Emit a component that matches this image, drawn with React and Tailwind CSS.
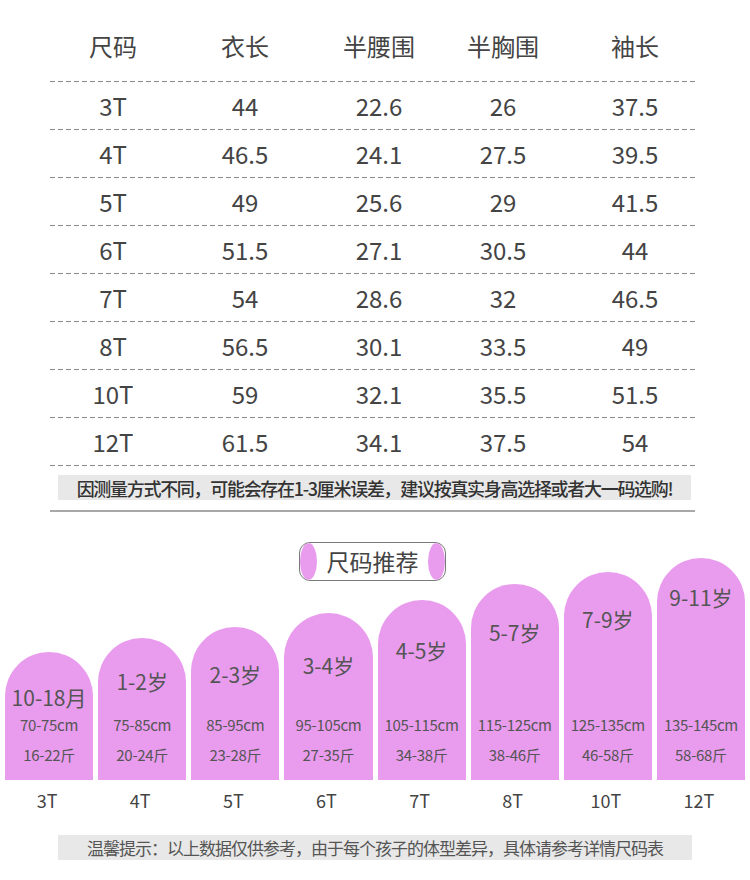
import React from "react";

const rows = [
  ["3T", "44", "22.6", "26", "37.5"],
  ["4T", "46.5", "24.1", "27.5", "39.5"],
  ["5T", "49", "25.6", "29", "41.5"],
  ["6T", "51.5", "27.1", "30.5", "44"],
  ["7T", "54", "28.6", "32", "46.5"],
  ["8T", "56.5", "30.1", "33.5", "49"],
  ["10T", "59", "32.1", "35.5", "51.5"],
  ["12T", "61.5", "34.1", "37.5", "54"],
];

const bars = [
  { h: "h-[128px]", pt: "pt-[31px]", age: "10-18月", cm: "70-75cm", kg: "16-22斤", size: "3T" },
  { h: "h-[142px]", pt: "pt-[29px]", age: "1-2岁", cm: "75-85cm", kg: "20-24斤", size: "4T" },
  { h: "h-[153px]", pt: "pt-[33px]", age: "2-3岁", cm: "85-95cm", kg: "23-28斤", size: "5T" },
  { h: "h-[167px]", pt: "pt-[38px]", age: "3-4岁", cm: "95-105cm", kg: "27-35斤", size: "6T" },
  { h: "h-[180px]", pt: "pt-[36px]", age: "4-5岁", cm: "105-115cm", kg: "34-38斤", size: "7T" },
  { h: "h-[196px]", pt: "pt-[34px]", age: "5-7岁", cm: "115-125cm", kg: "38-46斤", size: "8T" },
  { h: "h-[208px]", pt: "pt-[33px]", age: "7-9岁", cm: "125-135cm", kg: "46-58斤", size: "10T" },
  { h: "h-[222px]", pt: "pt-[25px]", age: "9-11岁", cm: "135-145cm", kg: "58-68斤", size: "12T" },
];

const Dashed = () => (
  <div className="h-px w-full bg-[linear-gradient(to_right,#8a8a8a_5px,transparent_5px)] bg-[length:8px_1px] bg-repeat-x" />
);

const cols = "grid grid-cols-[126px_138px_130px_118px_146px]";

const App = () => {
  return (
    <div className="w-[750px] h-[880px] bg-white text-[#444] font-['Noto_Sans_CJK_SC','Noto_Sans',sans-serif] overflow-hidden">
      <div className="ml-[50px] w-[645px]">
        <div className={`${cols} h-[81px] pt-[30px] text-[24px] leading-[32px]`}>
          {["尺码", "衣长", "半腰围", "半胸围", "袖长"].map((t) => (
            <div key={t} className="text-center">
              {t}
            </div>
          ))}
        </div>
        <Dashed />
        {rows.map((r) => (
          <div key={r[0]}>
            <div className={`${cols} h-[47px] items-center text-[24px] leading-[30px]`}>
              {r.map((v, i) => (
                <div key={i} className="text-center">
                  {v}
                </div>
              ))}
            </div>
            <Dashed />
          </div>
        ))}
        <div className="mt-[9px] ml-[8px] mr-[4px] h-[25px] bg-[#e8e8e8] flex items-center justify-center text-[18px] tracking-[-1.3px] font-medium text-[#333] leading-none">
          因测量方式不同，可能会存在1-3厘米误差，建议按真实身高选择或者大一码选购!
        </div>
        <div className="mt-[10px] h-[2px] bg-[#a8a8a8]" />
      </div>

      <div className="mt-[30px] ml-[299px] w-[147px] h-[39px] relative overflow-hidden rounded-[11px] border-[1.5px] border-[#7a7a7a] flex items-center justify-center">
        <div className="absolute left-0 top-0 h-full w-[17px] rounded-[50%] bg-[#e99cee]" />
        <div className="absolute right-0 top-0 h-full w-[17px] rounded-[50%] bg-[#e99cee]" />
        <span className="text-[23px] leading-none text-[#444]">尺码推荐</span>
      </div>

      <div className="-mt-[23px] px-[5px] grid grid-cols-8 gap-[5px] items-end h-[222px]">
        {bars.map((b) => (
          <div
            key={b.size}
            className={`${b.h} ${b.pt} rounded-t-full bg-[#e99cee] flex flex-col items-center text-[#555] pb-[15px]`}
          >
            <div className="text-[21px] leading-[28px] whitespace-nowrap">{b.age}</div>
            <div className="flex-1" />
            <div className="text-[15px] leading-[20px] tracking-[-0.3px] whitespace-nowrap">{b.cm}</div>
            <div className="mt-[10px] text-[15px] leading-[20px] tracking-[-0.3px] whitespace-nowrap">{b.kg}</div>
          </div>
        ))}
      </div>
      <div className="px-[5px] grid grid-cols-8 gap-[5px] h-[40px] items-center">
        {bars.map((b) => (
          <div key={b.size} className="text-center text-[18px] leading-none text-[#444] pr-[4px]">
            {b.size}
          </div>
        ))}
      </div>

      <div className="mt-[15px] ml-[58px] w-[634px] h-[25px] bg-[#e8e8e8] flex items-center justify-center text-[17px] tracking-[-1px] text-[#555] leading-none">
        温馨提示：以上数据仅供参考，由于每个孩子的体型差异，具体请参考详情尺码表
      </div>
    </div>
  );
};

export default App;
